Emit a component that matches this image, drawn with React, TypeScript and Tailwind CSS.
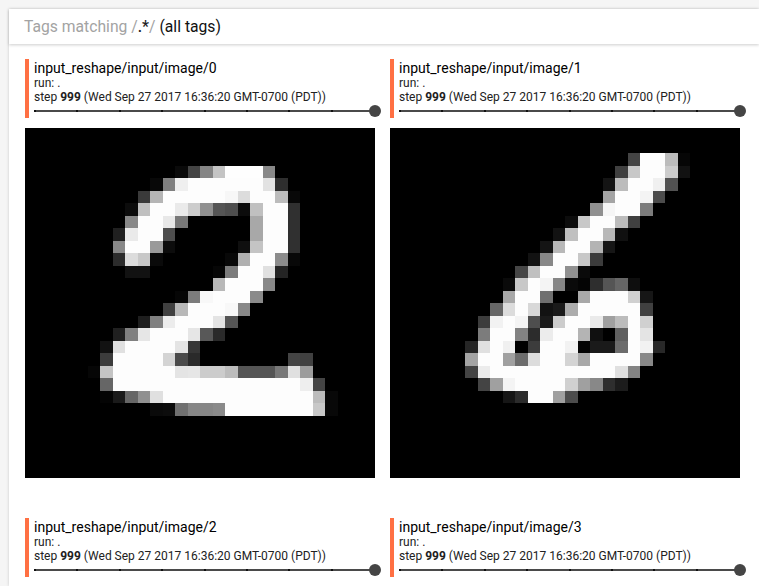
import React from 'react';

type Row = [number, number, string];

// each row: row index, first column, grey levels as hex pairs
const digitTwo: Row[] = [
  [3, 12, '0a4485c4fefefe88'],
  [4, 10, '0880effdfdfdfdfdfde22e'],
  [5, 9, '3ab5fdfdfdfdfdf7dcfdfdbc08'],
  [6, 8, '0cc0fdfdeacc90554e0cc0fdfd30'],
  [7, 8, '88fdfde8780000000000a8fdfd30'],
  [8, 7, '20eafdfd4e000000000000a8fdfd30'],
  [9, 7, '88fdfd9a0c00000000000fc4fdfd30'],
  [10, 7, '2cdcc80a000000000008b0fdfd8c08'],
  [11, 8, '12120000000000067cfdfde024'],
  [12, 15, 'b8fdfdfd88'],
  [13, 12, '067cf8fdfdfd8a'],
  [14, 11, '40b8fdfdfdf888'],
  [15, 9, '1e80ecfdfdfde455'],
  [16, 7, '2080e6fdfdfde6582a'],
  [17, 6, '12e0fdfdfdfde436'],
  [18, 6, '3cfdfdfdfdd44a2a000000000000004440'],
  [19, 5, '06c4fdfdfdfdfde4e6ccccbc55555578e09c'],
  [20, 6, '66fdfdfdfdfdfdfdfdfdfdfdfdfdfdfdee44'],
  [21, 6, '041a6690e0fdfdfdfdfdfdfdfdfdfdfdfdbc08'],
  [22, 10, '0a0c7086868afdfdfdfdfdfdfdc808'],
];

const digitSix: Row[] = [
  [2, 19, '44fdfdbc06'],
  [3, 18, '40c8fdfdcc12'],
  [4, 17, '14bcfdfdf052'],
  [5, 17, 'a4fdfdf44c'],
  [6, 16, '90f6fdfd7c'],
  [7, 14, '0cc8fdfdbc40'],
  [8, 13, '12c0fdfdb810'],
  [9, 12, '14b8fdfdb416'],
  [10, 11, '1288fdfdc83c'],
  [11, 10, '46c0fdfd900a'],
  [12, 9, '0ac8fdf4860a042e55660e'],
  [13, 9, 'a8fdfd700000a8fdfdfdd016'],
  [14, 8, '66dcfdd8121aacfdfdfdfdfd40'],
  [15, 7, '3cf2fdf44e1accfdfdeaa0bcfdd0'],
  [16, 7, '7cfdfd822cecfdfdb4100060fde4'],
  [17, 6, '26e0fdf0003cfdfdf2041a1a6cfdf228'],
  [18, 6, 'a4fdfda06cdcfdfdd4a8fdfdfdfd88'],
  [19, 6, '44ecfdfdfdfdfdfdfdfdfdfde084'],
  [20, 7, '44a0f4fdfdfdfdd0a0882e1c'],
  [21, 9, '162cfdfda04c'],
];

const Digit: React.FC<{ rows: Row[] }> = ({ rows }) => (
  <svg viewBox="0 0 28 28" className="block w-[350px] h-[350px] bg-black" shapeRendering="crispEdges">
    {rows.map(([y, start, hex]) =>
      (hex.match(/../g) ?? []).map((level, i) =>
        level === '00' ? null : (
          <rect key={`${y}-${i}`} x={start + i} y={y} width={1} height={1} fill={`#${level}${level}${level}`} />
        )
      )
    )}
  </svg>
);

const Slider: React.FC = () => (
  <div className="relative h-[2px] mt-[5px] w-[341px] bg-[#4a4a4a] flex justify-between">
    {Array.from({ length: 9 }).map((_, i) => (
      <span key={i} className="h-[2px] w-[2px] bg-[#111111]" />
    ))}
    <span className="absolute right-[-6px] top-[-5px] h-3 w-3 rounded-full bg-[#454545]" />
  </div>
);

const ImageCard: React.FC<{ index: number; rows?: Row[] }> = ({ index, rows }) => (
  <div className="w-[350px]">
    <div className="border-l-4 border-[#ff7043] h-[59px] pl-[5px] pt-px">
      <p className="text-[14px] leading-[17px] text-black">input_reshape/input/image/{index}</p>
      <p className="text-[12px] leading-[13px] text-[#212121]">run: .</p>
      <p className="text-[12px] leading-[15px] text-[#212121]">
        step <span className="font-bold">999</span> (Wed Sep 27 2017 16:36:20 GMT-0700 (PDT))
      </p>
      <Slider />
    </div>
    <div className="mt-[10px]">{rows && <Digit rows={rows} />}</div>
  </div>
);

const App: React.FC = () => {
  return (
    <div className="h-[586px] w-full overflow-hidden bg-[#f5f5f5] pt-[9px] pl-[9px] font-['Roboto',sans-serif]">
      <div className="h-full bg-white shadow-[0_0_3px_rgba(0,0,0,0.18)]">
        <div className="h-[35px] flex items-center pl-[15px] bg-white shadow-[0_1px_3px_rgba(0,0,0,0.2)] text-[15.7px]">
          <span className="text-[#a3a3a3]">Tags matching&nbsp;</span>
          <span className="text-[#a3a3a3]">/</span>
          <span className="text-[#212121] font-medium">.*</span>
          <span className="text-[#a3a3a3]">/</span>
          <span className="text-[#111111]">&nbsp;(all tags)</span>
        </div>
        <div className="grid grid-cols-[350px_350px] gap-x-[15px] gap-y-[40px] pl-[16px] pt-[15px]">
          <ImageCard index={0} rows={digitTwo} />
          <ImageCard index={1} rows={digitSix} />
          <ImageCard index={2} />
          <ImageCard index={3} />
        </div>
      </div>
    </div>
  );
};

export default App;
